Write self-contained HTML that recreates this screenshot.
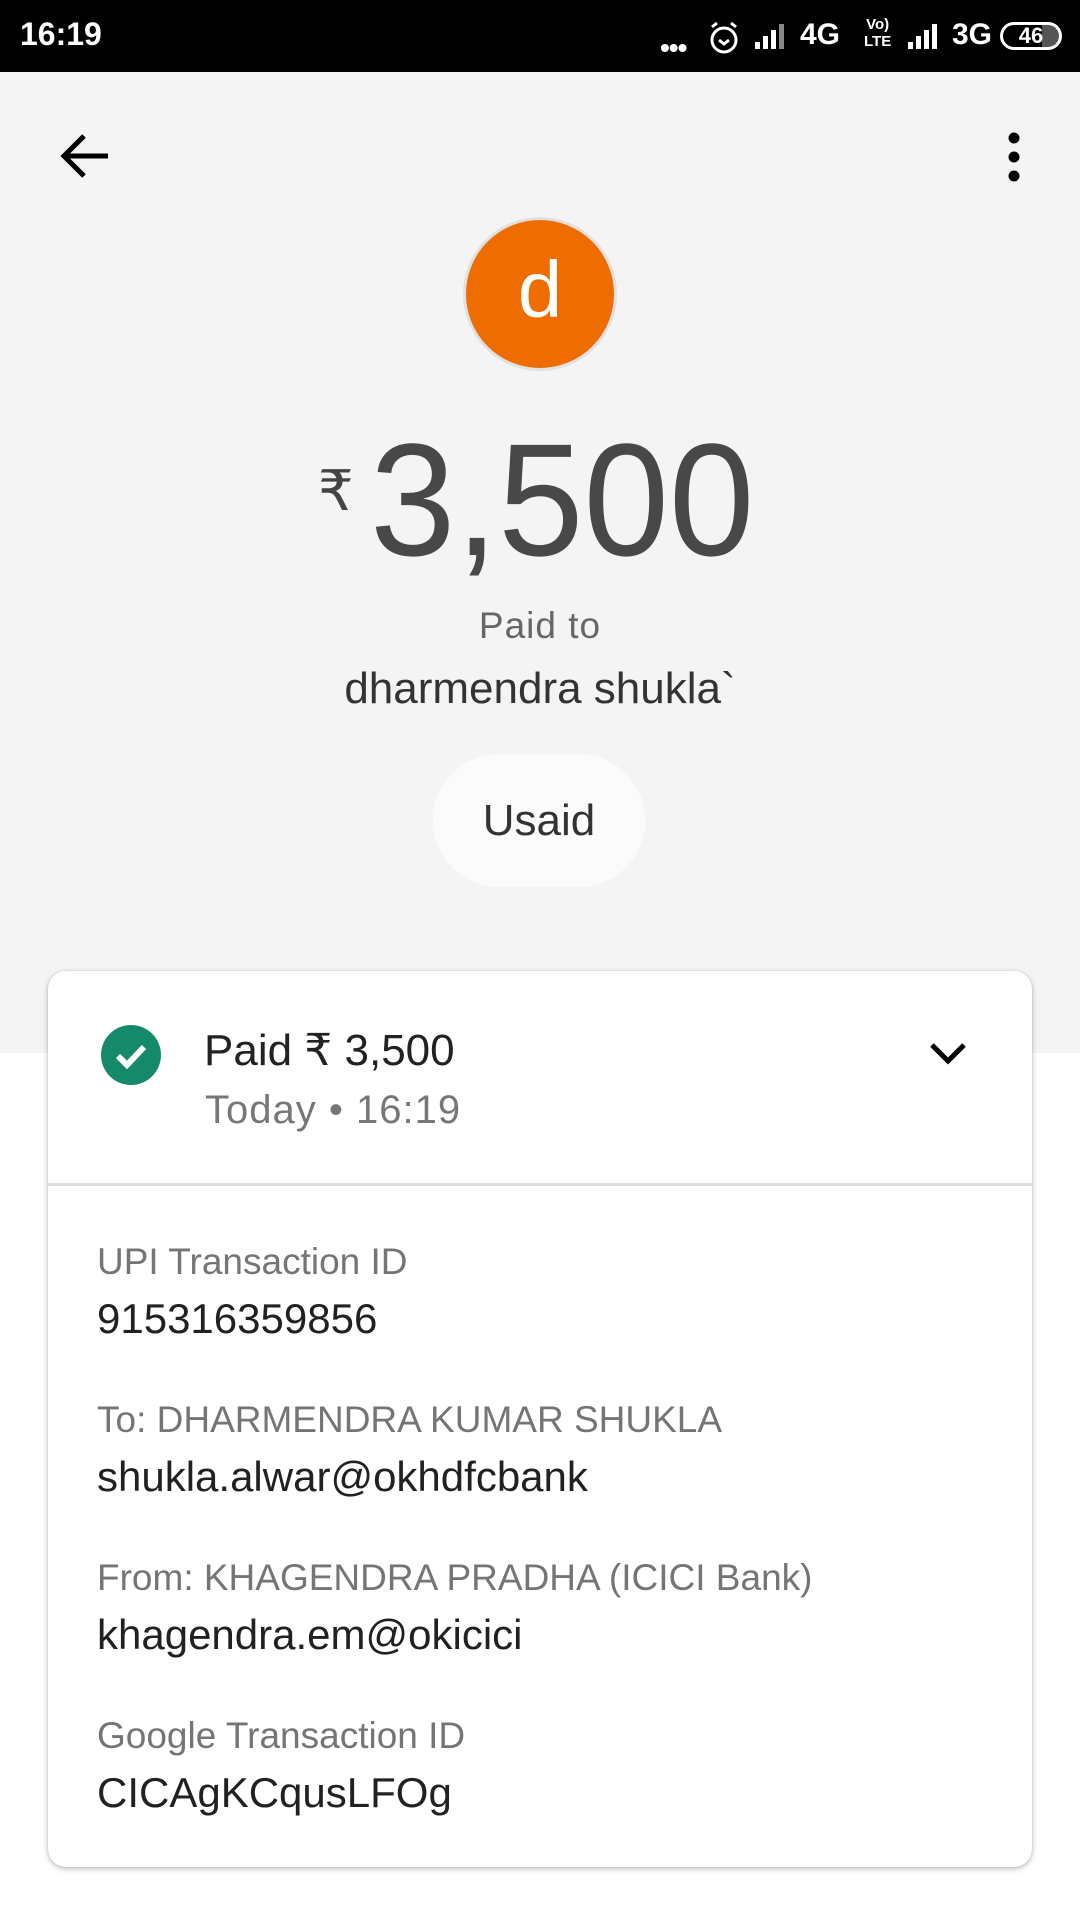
<!DOCTYPE html>
<html><head><meta charset="utf-8"><style>
*{margin:0;padding:0;box-sizing:border-box}
body{width:1080px;height:1920px;background:#fff;font-family:"Liberation Sans",sans-serif;position:relative;overflow:hidden}
.abs{position:absolute}
.sb{left:0;top:0;width:1080px;height:72px;background:#000;color:#fff}
.top{left:0;top:72px;width:1080px;height:981px;background:#f4f4f4}
.c{left:0;width:1080px;text-align:center;white-space:nowrap}
.card{left:48px;top:971px;width:984px;height:896px;background:#fff;border-radius:18px;box-shadow:0 2px 6px rgba(0,0,0,.25),0 0 2px rgba(0,0,0,.12)}
.lbl{left:97px;font-size:37px;color:#757575;white-space:nowrap}
.val{left:97px;font-size:42px;color:#212121;white-space:nowrap}
</style></head><body>
<div class="abs sb">
<div class="abs" style="left:20px;top:16px;font-size:32px;font-weight:bold">16:19</div>
<div class="abs" style="left:660px;top:32px;font-size:28px;font-weight:bold;letter-spacing:-1px">•••</div>
<svg class="abs" style="left:706px;top:20px" width="36" height="36" viewBox="0 0 36 36"><circle cx="18" cy="20" r="12" fill="none" stroke="#fff" stroke-width="3"/><path d="M13 20l5 4 5-4M6 7l5-4M30 7l-5-4" stroke="#fff" stroke-width="3" fill="none"/></svg>
<svg class="abs" style="left:755px;top:22px" width="40" height="28"><rect x="0" y="20" width="5" height="7" fill="#fff"/><rect x="8" y="14" width="5" height="13" fill="#fff"/><rect x="16" y="8" width="5" height="19" fill="#fff"/><rect x="24" y="2" width="5" height="25" fill="#888"/></svg>
<div class="abs" style="left:800px;top:18px;font-size:30px;font-weight:bold">4G</div>
<div class="abs" style="left:864px;top:16px;font-size:15px;font-weight:bold;line-height:17px;text-align:center">Vo)<br>LTE</div>
<svg class="abs" style="left:908px;top:22px" width="40" height="28"><rect x="0" y="20" width="5" height="7" fill="#fff"/><rect x="8" y="14" width="5" height="13" fill="#fff"/><rect x="16" y="8" width="5" height="19" fill="#fff"/><rect x="24" y="2" width="5" height="25" fill="#fff"/></svg>
<div class="abs" style="left:952px;top:18px;font-size:30px;font-weight:bold">3G</div>
<div class="abs" style="left:1000px;top:22px;width:62px;height:28px;border:3px solid #fff;border-radius:14px;font-size:22px;font-weight:bold;text-align:center;line-height:22px;background:linear-gradient(90deg,transparent 70%,#555 70%)">46</div>
</div>
<div class="abs top"></div>
<svg class="abs" style="left:58px;top:132px" width="52" height="48" viewBox="0 0 52 48"><path d="M50 24H6M26 4L6 24l20 20" stroke="#000" stroke-width="5" fill="none"/></svg>
<svg class="abs" style="left:1004px;top:130px" width="20" height="54"><circle cx="10" cy="8" r="5.5"/><circle cx="10" cy="27" r="5.5"/><circle cx="10" cy="46" r="5.5"/></svg>
<div class="abs" style="left:463px;top:217px;width:154px;height:154px;border-radius:50%;background:#ef6c00;border:3px solid #e0e0e0;color:#fff;font-size:80px;text-align:center;line-height:140px">d</div>
<div class="abs" style="left:318px;top:458px;font-size:56px;color:#444">₹</div>
<div class="abs" style="left:370px;top:410px;font-size:160px;color:#484848;transform:scaleX(0.96);transform-origin:left;white-space:nowrap;line-height:180px">3,500</div>
<div class="abs c" style="top:605px;font-size:37px;color:#666;letter-spacing:1px">Paid to</div>
<div class="abs c" style="top:664px;font-size:44px;color:#333">dharmendra shukla`</div>
<div class="abs" style="left:433px;top:754px;width:212px;height:133px;border-radius:66px;background:#fbfbfb;font-size:44px;color:#333;text-align:center;line-height:133px">Usaid</div>
<div class="abs card"></div>
<svg class="abs" style="left:100px;top:1024px" width="62" height="62" viewBox="0 0 62 62"><circle cx="31" cy="31" r="30" fill="#158a6b"/><path d="M18 32l9 9 17-18" stroke="#fff" stroke-width="6" fill="none"/></svg>
<div class="abs" style="left:204px;top:1025px;font-size:44px;color:#222;white-space:nowrap">Paid ₹ 3,500</div>
<div class="abs" style="left:205px;top:1088px;font-size:40px;color:#777;white-space:nowrap;letter-spacing:1px">Today • 16:19</div>
<svg class="abs" style="left:928px;top:1040px" width="40" height="28"><path d="M4 5l16 16 16-16" stroke="#000" stroke-width="5" fill="none"/></svg>
<div class="abs" style="left:48px;top:1183px;width:984px;height:3px;background:#ddd"></div>
<div class="abs lbl" style="top:1241px">UPI Transaction ID</div>
<div class="abs val" style="top:1295px">915316359856</div>
<div class="abs lbl" style="top:1399px">To: DHARMENDRA KUMAR SHUKLA</div>
<div class="abs val" style="top:1453px">shukla.alwar@okhdfcbank</div>
<div class="abs lbl" style="top:1557px">From: KHAGENDRA PRADHA (ICICI Bank)</div>
<div class="abs val" style="top:1611px">khagendra.em@okicici</div>
<div class="abs lbl" style="top:1715px">Google Transaction ID</div>
<div class="abs val" style="top:1769px">CICAgKCqusLFOg</div>
</body></html>
